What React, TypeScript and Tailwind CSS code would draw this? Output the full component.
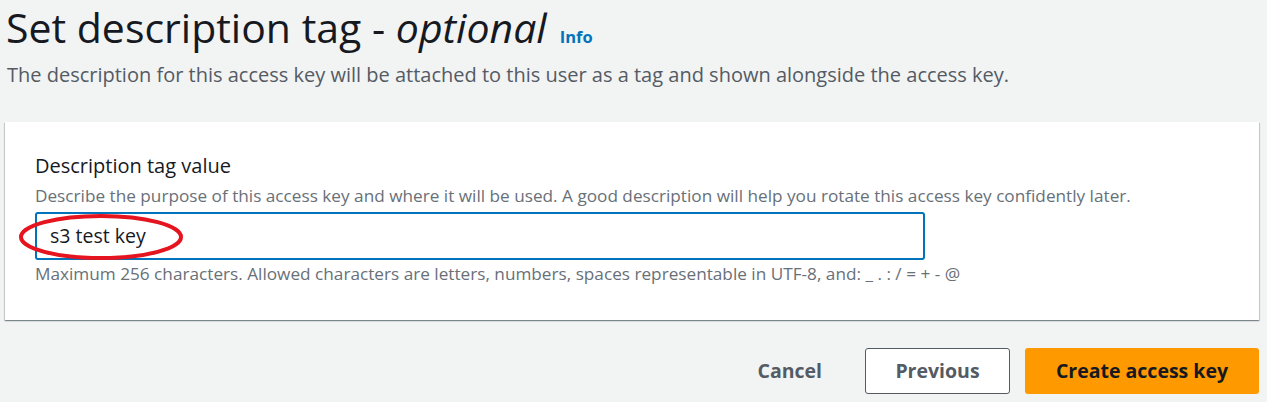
import React from "react";

export default function App() {
  const font = { fontFamily: "'Open Sans', 'Noto Sans', sans-serif" };
  return (
    <div style={font} className="w-[1267px] h-[402px] bg-[#f2f3f3] overflow-hidden flex flex-col">
      <div className="flex items-baseline pl-[6px] pt-[3px]">
        <h1 className="text-[41px] leading-[48px] text-[#16191f] font-normal">
          Set description tag - <i>optional</i>
        </h1>
        <span className="ml-[13px] text-[16.5px] font-bold text-[#0073bb]">Info</span>
      </div>
      <p className="pl-[7px] mt-[12px] text-[20px] leading-[24px] text-[#545b64]">
        The description for this access key will be attached to this user as a tag and shown alongside the access key.
      </p>
      <div className="mx-[5px] w-[1254px] mt-[35px] bg-white h-[198px] shadow-[0_1px_1px_0_rgba(0,28,36,0.3),1px_1px_1px_0_rgba(0,28,36,0.15),-1px_1px_1px_0_rgba(0,28,36,0.15)] pl-[30px] pt-[32px]">
        <div className="text-[20px] leading-[24px] text-[#16191f]">Description tag value</div>
        <div className="mt-[7px] text-[17.2px] leading-[22px] text-[#687078]">
          Describe the purpose of this access key and where it will be used. A good description will help you rotate this access key confidently later.
        </div>
        <div className="relative mt-[5px] w-[890px] h-[48px] border-2 border-[#0073bb] rounded-[3px] flex items-center pl-[13px] text-[19.5px] text-[#16191f]">
          s3 test key
          <svg className="absolute left-[-20px] top-[-2px]" width="168" height="50" viewBox="0 0 168 50">
            <ellipse cx="84" cy="25" rx="80" ry="21" fill="none" stroke="#e5141f" strokeWidth="4" />
          </svg>
        </div>
        <div className="mt-[3px] text-[17.2px] leading-[22px] text-[#687078]">
          Maximum 256 characters. Allowed characters are letters, numbers, spaces representable in UTF-8, and: _ . : / = + - @
        </div>
      </div>
      <div className="flex justify-end items-center pr-[8px] mt-[28px] gap-[15px]">
        <button className="text-[19.5px] font-bold text-[#545b64] px-[28px] h-[46px]">Cancel</button>
        <button className="text-[19.5px] font-bold text-[#545b64] bg-white border border-[#545b64] rounded-[3px] w-[145px] h-[46px]">Previous</button>
        <button className="text-[19.5px] font-bold text-[#16191f] bg-[#ff9900] rounded-[3px] w-[234px] h-[46px]">Create access key</button>
      </div>
    </div>
  );
}
